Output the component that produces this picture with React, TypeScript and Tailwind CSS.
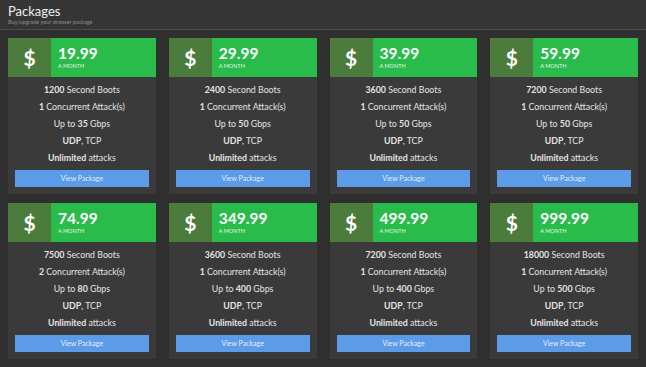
const packages = [
  { price: "19.99", boots: "1200", conc: "1", gbps: "35" },
  { price: "29.99", boots: "2400", conc: "1", gbps: "50" },
  { price: "39.99", boots: "3600", conc: "1", gbps: "50" },
  { price: "59.99", boots: "7200", conc: "1", gbps: "50" },
  { price: "74.99", boots: "7500", conc: "2", gbps: "80" },
  { price: "349.99", boots: "3600", conc: "1", gbps: "400" },
  { price: "499.99", boots: "7200", conc: "1", gbps: "400" },
  { price: "999.99", boots: "18000", conc: "1", gbps: "500" },
];

function PackageCard({ price, boots, conc, gbps }: (typeof packages)[number]) {
  return (
    <div className="bg-[#3a3a3a] flex flex-col">
      <div className="flex h-[39px]">
        <div className="w-[43px] bg-[#4b7c3c] flex items-center justify-center text-white font-bold text-[21px] leading-none">
          $
        </div>
        <div className="flex-1 bg-[#29bc4b] flex flex-col justify-center pl-[7px] text-white">
          <div className="text-[15.5px] font-bold leading-[15px]">{price}</div>
          <div className="text-[5.5px] leading-[8px] mt-[1px] text-[#e4f6e7]">A MONTH</div>
        </div>
      </div>
      <div className="pt-[4px] px-[7px] pb-[7px] flex flex-col text-[8.8px] text-[#e4e4e4] text-center">
        <div className="leading-[17px]">
          <b>{boots}</b> Second Boots
        </div>
        <div className="leading-[17px]">
          <b>{conc}</b> Concurrent Attack(s)
        </div>
        <div className="leading-[17px]">
          Up to <b>{gbps}</b> Gbps
        </div>
        <div className="leading-[17px]">
          <b>UDP</b>, TCP
        </div>
        <div className="leading-[17px]">
          <b>Unlimited</b> attacks
        </div>
        <button className="mt-[4px] h-[17px] bg-[#5b9be8] text-[#e6effc] text-[7px] leading-none">
          View Package
        </button>
      </div>
    </div>
  );
}

export default function App() {
  return (
    <div
      className="w-[646px] h-[367px] bg-[#2f2f2f] overflow-hidden"
      style={{ fontFamily: "Lato, 'Open Sans', sans-serif" }}
    >
      <div className="h-[30px] bg-[#353535] border-b border-[#4c4f48] px-[8px] pt-[4px]">
        <div className="text-[13px] leading-[15px] text-[#f0f0f0]">Packages</div>
        <div className="text-[5.5px] leading-[7px] text-[#8c8c8c]">Buy/upgrade your stresser package</div>
      </div>
      <div className="grid grid-cols-4 gap-x-[13px] gap-y-[9px] px-[8px] pt-[8px]">
        {packages.map((p) => (
          <PackageCard key={p.price} {...p} />
        ))}
      </div>
    </div>
  );
}
